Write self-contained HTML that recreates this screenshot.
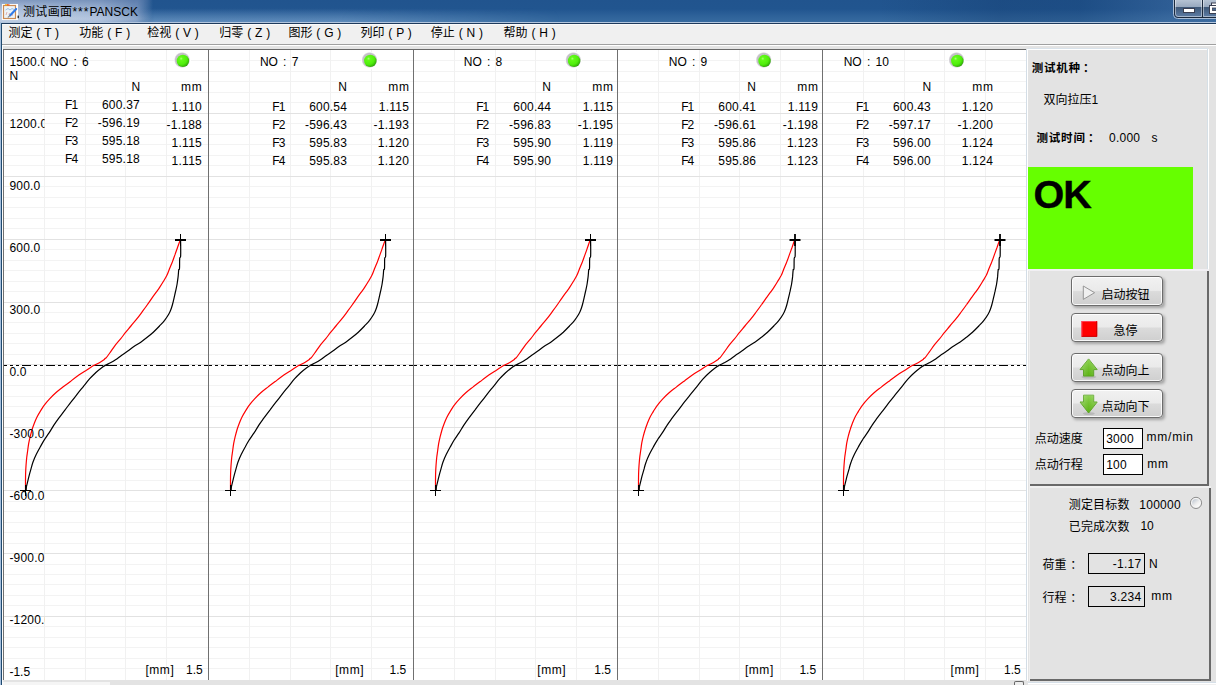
<!DOCTYPE html>
<html lang="zh-CN"><head><meta charset="utf-8"><title>测试画面***PANSCK</title>
<style>

html,body{margin:0;padding:0;}
body{width:1216px;height:685px;position:relative;overflow:hidden;background:#e3e3e3;
 font-family:"Liberation Sans", "Noto Sans CJK SC", sans-serif;font-size:12px;color:#000;line-height:1;}
.abs{position:absolute;}
.t{position:absolute;white-space:nowrap;line-height:14px;height:14px;}
.b{font-weight:bold;}
#titlebar{position:absolute;left:0;top:0;width:1216px;height:22px;
 background:linear-gradient(to bottom,#21548e 0,#21558f 9px,#2c6098 15px,#376ba0 22px);}
#titleglow{position:absolute;left:0;top:0;width:230px;height:22px;
 background:linear-gradient(to right,rgba(190,205,228,.95) 0,rgba(176,194,222,.9) 100px,rgba(150,172,208,.7) 137px,rgba(120,150,195,0) 153px);}
#menubar{position:absolute;left:2px;top:24px;width:1214px;height:20px;background:#f0f0f0;border-top:1px solid #fbfbfb;box-sizing:border-box;}
.mi{position:absolute;top:25.6px;height:14px;line-height:14px;white-space:nowrap;font-size:12px;word-spacing:.5px;}
.btn{position:absolute;left:1070.6px;width:92px;height:29.7px;box-sizing:border-box;border:1px solid #6c6c6c;border-radius:4px;
 background:linear-gradient(to bottom,#f1f1f1 0,#eaeaea 48%,#dbdbdb 52%,#cfcfcf 100%);
 box-shadow:inset 0 0 0 1px rgba(255,255,255,.85), 2px 2px 3px rgba(0,0,0,.28);}
.btn span{position:absolute;white-space:nowrap;line-height:14px;height:14px;font-size:12px;}
.inp{position:absolute;box-sizing:border-box;border:1px solid #000;}

</style></head><body>
<div id="titlebar"></div>
<div class="abs" style="left:880px;top:0;width:336px;height:22px;background:linear-gradient(to right,rgba(20,60,110,0) 0,rgba(20,60,110,.35) 120px,rgba(20,60,110,.3) 200px,rgba(70,110,160,.35) 290px)"></div>
<div class="abs" style="left:140px;top:8px;width:420px;height:14px;background:linear-gradient(to bottom,rgba(150,185,225,0) 0,rgba(150,185,225,.42) 100%);-webkit-mask-image:linear-gradient(to right,transparent 0,#000 14px,#000 200px,transparent 100%);mask-image:linear-gradient(to right,transparent 0,#000 14px,#000 200px,transparent 100%)"></div>
<div id="titleglow"></div>
<div class="abs" style="left:0;top:0;width:170px;height:22px;background:linear-gradient(to bottom,rgba(60,95,150,.42) 0,rgba(60,95,150,.18) 6px,rgba(60,95,150,0) 12px,rgba(255,255,255,.18) 19px,rgba(255,255,255,.05) 22px);-webkit-mask-image:linear-gradient(to right,#000 0,#000 134px,transparent 152px);mask-image:linear-gradient(to right,#000 0,#000 134px,transparent 152px)"></div>
<div class="abs" style="left:0;top:22px;width:1216px;height:1px;background:#b3c6de"></div>
<div class="abs" style="left:1px;top:23px;width:1215px;height:1px;background:#1e3a5c"></div>
<div class="abs" style="left:0;top:22px;width:1px;height:663px;background:#a5bedb"></div>
<div class="abs" style="left:1px;top:23px;width:1px;height:662px;background:#1f4a70"></div>
<div class="abs" style="left:2px;top:24px;width:1px;height:661px;background:#fcfcfc"></div>
<svg class="abs" style="left:2px;top:4px" width="18" height="16" viewBox="0 0 18 16"><rect x="0" y="0" width="16" height="16" fill="#fff"/><rect x="1.5" y="1.5" width="12" height="13" fill="#eef3f6" stroke="#c98a55" stroke-width="1.2"/><rect x="3" y="0.3" width="3" height="1.2" fill="#f6a400"/><rect x="5" y="0.3" width="2.5" height="1.2" fill="#f05030"/><path d="M3.5 6 L6 4.5 L8 6 L10 4.5 L12 5.5" stroke="#9cc0e8" stroke-width="1" fill="none"/><path d="M4 11 L5 8 M7 11 L7.5 9 M10 12 L10.5 10" stroke="#d8a0a0" stroke-width=".8" fill="none"/><path d="M14.2 5 L8 11.4" stroke="#2f7ae8" stroke-width="2.1" stroke-linecap="round"/><path d="M7.6 11.8 L6.2 13.2" stroke="#8a8a8a" stroke-width="1.2" stroke-linecap="round"/><rect x="15.6" y="11.6" width="1.2" height="2.6" fill="#111"/></svg>
<div class="t" style="left:23px;top:5.4px;font-size:12px;"><span style="letter-spacing:.35px">测试画面</span><span style="letter-spacing:1px">***</span>PANSCK</div>
<svg class="abs" style="left:1168px;top:0" width="48" height="22" viewBox="1168 0 48 22"><defs><linearGradient id="cb" x1="0" y1="0" x2="0" y2="1"><stop offset="0" stop-color="#b9c6d6"/><stop offset=".44" stop-color="#97a8be"/><stop offset=".46" stop-color="#3e5878"/><stop offset="1" stop-color="#5f7fa8"/></linearGradient></defs><path d="M1173.5 -1 V14.5 Q1173.5 18.5 1177.5 18.5 H1217" fill="none" stroke="#a9bdd6" stroke-width="1"/><path d="M1174.5 -1 V14 Q1174.5 17.5 1178 17.5 H1217 V-1 Z" fill="url(#cb)" stroke="#1b2a3e" stroke-width="1"/><path d="M1175.5 0 V14 Q1175.5 16.5 1178 16.5 H1201.5 V0" fill="none" stroke="rgba(255,255,255,.45)" stroke-width="1"/><path d="M1202.5 0 V17" stroke="#1b2a3e" stroke-width="1"/><path d="M1203.5 0 V16.5 H1217" stroke="rgba(255,255,255,.45)" stroke-width="1" fill="none"/><rect x="1183.5" y="8.5" width="11" height="4" fill="#fff" stroke="#3a3f52" stroke-width="1"/><rect x="1211.5" y="3" width="8" height="6" fill="#fff" stroke="#3a3f52" stroke-width="1"/><rect x="1209.5" y="5.5" width="10" height="8" fill="#fff" stroke="#3a3f52" stroke-width="1"/><rect x="1212.5" y="8" width="5" height="2.5" fill="#4a6a90" stroke="#3a3f52" stroke-width=".8"/></svg>
<div id="menubar"></div>
<div class="abs" style="left:2px;top:44px;width:1214px;height:1px;background:#a0a0a0"></div>
<div class="abs" style="left:2px;top:45px;width:1214px;height:1px;background:#fff"></div>
<div class="mi" style="left:8.5px">测定 ( T )</div>
<div class="mi" style="left:79.3px">功能 ( F )</div>
<div class="mi" style="left:147.3px">检视 ( V )</div>
<div class="mi" style="left:219.3px">归零 ( Z )</div>
<div class="mi" style="left:288.5px">图形 ( G )</div>
<div class="mi" style="left:360.5px">列印 ( P )</div>
<div class="mi" style="left:430.8px">停止 ( N )</div>
<div class="mi" style="left:503.6px">帮助 ( H )</div>
<svg class="abs" style="left:0;top:46px" width="1030" height="639" viewBox="0 46 1030 639" font-family='&quot;Liberation Sans&quot;, &quot;Noto Sans CJK SC&quot;, sans-serif' font-size="12">
<rect x="3" y="49" width="1024" height="632" fill="#fff"/>
<path d="M4 60.5H1026M4 71.5H1026M4 81.5H1026M4 92.5H1026M4 102.5H1026M4 123.5H1026M4 134.5H1026M4 144.5H1026M4 155.5H1026M4 165.5H1026M4 186.5H1026M4 197.5H1026M4 207.5H1026M4 218.5H1026M4 228.5H1026M4 249.5H1026M4 260.5H1026M4 270.5H1026M4 281.5H1026M4 291.5H1026M4 312.5H1026M4 322.5H1026M4 333.5H1026M4 343.5H1026M4 354.5H1026M4 375.5H1026M4 385.5H1026M4 396.5H1026M4 406.5H1026M4 417.5H1026M4 438.5H1026M4 448.5H1026M4 459.5H1026M4 469.5H1026M4 480.5H1026M4 501.5H1026M4 511.5H1026M4 522.5H1026M4 532.5H1026M4 543.5H1026M4 564.5H1026M4 574.5H1026M4 584.5H1026M4 595.5H1026M4 605.5H1026M4 626.5H1026M4 637.5H1026M4 647.5H1026M4 658.5H1026M4 668.5H1026" stroke="#f3f3f3" stroke-width="1" fill="none"/>
<path d="M44.5 50V680M85.5 50V680M125.5 50V680M166.5 50V680M249.5 50V680M290.5 50V680M330.5 50V680M371.5 50V680M454.5 50V680M495.5 50V680M535.5 50V680M576.5 50V680M658.5 50V680M699.5 50V680M739.5 50V680M780.5 50V680M863.5 50V680M904.5 50V680M944.5 50V680M985.5 50V680" stroke="#f1f1f1" stroke-width="1" fill="none"/>
<path d="M4 113.5H1026M4 176.5H1026M4 239.5H1026M4 302.5H1026M4 364.5H1026M4 427.5H1026M4 490.5H1026M4 553.5H1026M4 616.5H1026" stroke="#e2e2e2" stroke-width="1" fill="none"/>
<path d="M3 49.5H1026" stroke="#696969" stroke-width="1" fill="none"/>
<path d="M3.5 50V681M208.5 50V681M413.5 50V681M617.5 50V681M822.5 50V681" stroke="#707070" stroke-width="1" fill="none"/>
<path d="M1026.5 49V681" stroke="#d3dde6" stroke-width="1"/><path d="M1027.5 49V681" stroke="#fff" stroke-width="1"/>
<path d="M4 365.5H108" stroke="#000" stroke-width="1" stroke-dasharray="9 3 3 3 3 3" stroke-dashoffset="6" fill="none"/>
<path d="M108 365.5H208" stroke="#000" stroke-width="1" stroke-dasharray="9 3 3 3 3 3" fill="none"/>
<path d="M209 365.5H313" stroke="#000" stroke-width="1" stroke-dasharray="9 3 3 3 3 3" stroke-dashoffset="6" fill="none"/>
<path d="M313 365.5H413" stroke="#000" stroke-width="1" stroke-dasharray="9 3 3 3 3 3" fill="none"/>
<path d="M414 365.5H518" stroke="#000" stroke-width="1" stroke-dasharray="9 3 3 3 3 3" stroke-dashoffset="6" fill="none"/>
<path d="M518 365.5H617" stroke="#000" stroke-width="1" stroke-dasharray="9 3 3 3 3 3" fill="none"/>
<path d="M618 365.5H722" stroke="#000" stroke-width="1" stroke-dasharray="9 3 3 3 3 3" stroke-dashoffset="6" fill="none"/>
<path d="M722 365.5H822" stroke="#000" stroke-width="1" stroke-dasharray="9 3 3 3 3 3" fill="none"/>
<path d="M823 365.5H927" stroke="#000" stroke-width="1" stroke-dasharray="9 3 3 3 3 3" stroke-dashoffset="6" fill="none"/>
<path d="M927 365.5H1026" stroke="#000" stroke-width="1" stroke-dasharray="9 3 3 3 3 3" fill="none"/>
<path d="M180.6 240.0C180.6 241.3 180.7 245.2 180.7 248.0C180.7 250.8 180.8 254.8 180.6 256.5C180.4 258.2 179.9 256.5 179.7 258.5C179.5 260.5 179.7 266.6 179.5 268.5C179.3 270.4 178.9 268.6 178.7 270.0C178.5 271.4 178.4 274.6 178.1 276.9C177.8 279.2 177.5 281.6 177.1 284.0C176.7 286.4 176.1 288.9 175.6 291.2C175.1 293.5 174.6 295.6 174.1 297.8C173.6 300.0 173.0 302.6 172.5 304.5C172.0 306.4 171.6 307.6 171.0 309.2C170.4 310.8 169.8 312.4 168.7 314.3C167.6 316.2 166.1 318.4 164.6 320.4C163.1 322.3 161.4 324.0 159.5 326.0C157.6 328.0 155.4 330.3 153.3 332.2C151.2 334.1 149.2 335.7 147.2 337.3C145.2 338.9 143.3 340.4 141.1 341.9C138.9 343.4 136.1 345.0 133.9 346.5C131.7 348.0 129.8 349.7 127.8 351.1C125.8 352.6 123.8 353.8 121.7 355.2C119.7 356.6 117.4 358.5 115.5 359.8C113.6 361.1 112.1 361.9 110.4 362.8C108.7 363.7 106.8 364.6 105.3 365.4C103.8 366.2 103.3 366.5 101.7 367.7C100.1 368.9 97.6 370.9 95.6 372.8C93.6 374.7 91.5 376.6 89.5 378.9C87.5 381.2 85.3 384.1 83.3 386.6C81.2 389.2 79.2 391.6 77.2 394.2C75.2 396.8 73.1 399.2 71.1 401.9C69.0 404.5 67.0 407.4 64.9 410.1C62.9 412.8 60.7 415.6 58.8 418.2C56.9 420.8 55.4 422.9 53.7 425.4C52.1 427.9 50.5 430.8 48.9 433.2C47.3 435.6 45.8 437.5 44.3 439.8C42.8 442.1 41.6 444.5 40.2 447.0C38.9 449.5 37.4 452.1 36.2 454.6C35.0 457.1 34.0 459.4 33.1 461.8C32.2 464.2 31.7 466.5 31.0 468.9C30.3 471.3 29.6 473.7 29.0 476.1C28.4 478.5 27.8 481.1 27.3 483.2C26.8 485.3 26.2 487.6 25.9 488.8C25.6 490.0 25.7 490.1 25.7 490.4" stroke="#000" stroke-width="1.2" fill="none"/>
<path d="M180.3 240.0C180.2 240.1 180.4 239.4 180.0 240.6C179.6 241.8 178.4 245.0 177.6 247.3C176.8 249.6 175.9 252.0 175.1 254.4C174.2 256.8 173.4 259.2 172.5 261.6C171.6 264.0 170.4 266.4 169.5 268.7C168.6 271.0 167.9 273.2 166.9 275.3C165.9 277.4 164.5 279.5 163.3 281.5C162.1 283.5 161.0 285.3 159.8 287.1C158.6 288.9 157.5 290.4 156.2 292.2C154.9 294.0 153.5 295.8 152.1 297.8C150.7 299.9 149.3 301.9 147.5 304.5C145.7 307.1 143.0 310.7 141.1 313.3C139.2 315.9 137.7 317.8 136.0 319.9C134.3 322.0 132.6 323.9 130.9 326.0C129.2 328.1 127.5 330.1 125.8 332.2C124.1 334.3 122.3 336.7 120.6 338.8C118.9 340.9 117.2 342.7 115.5 344.9C113.8 347.1 111.9 350.0 110.4 352.1C108.9 354.2 107.2 356.6 106.3 357.7C105.4 358.8 105.2 358.1 104.9 358.4C104.6 358.7 105.1 359.0 104.3 359.6C103.5 360.2 101.7 361.4 100.2 362.3C98.7 363.2 96.2 364.3 95.1 364.9C94.0 365.4 95.0 364.7 93.5 365.6C92.0 366.5 88.8 368.7 86.4 370.2C84.0 371.7 81.8 373.0 79.2 374.8C76.7 376.6 73.8 378.8 71.1 380.9C68.4 382.9 65.5 385.1 62.9 387.1C60.4 389.1 58.0 390.8 55.8 392.7C53.6 394.6 51.5 396.8 49.6 398.8C47.7 400.8 46.0 402.8 44.5 404.9C43.0 406.9 41.7 409.1 40.4 411.1C39.1 413.2 37.9 415.2 36.9 417.2C35.9 419.2 35.1 421.2 34.3 423.3C33.5 425.4 32.8 427.2 32.1 429.5C31.4 431.8 30.6 435.0 30.0 437.3C29.4 439.6 29.1 441.2 28.7 443.4C28.3 445.6 28.0 448.1 27.7 450.5C27.4 452.9 27.0 455.1 26.7 457.7C26.4 460.3 26.2 463.2 26.0 465.9C25.8 468.6 25.7 470.9 25.6 474.0C25.5 477.1 25.5 481.5 25.5 484.2C25.5 486.9 25.5 489.4 25.5 490.4" stroke="#ff0000" stroke-width="1.2" fill="none"/>
<path d="M175.0 240.0H186.0" stroke="#000" stroke-width="2"/><path d="M180.5 234.0V246.0" stroke="#000" stroke-width="1"/>
<path d="M20.0 490.5H31.0" stroke="#000" stroke-width="1"/><path d="M25.5 485.0V496.0" stroke="#000" stroke-width="1"/>
<path d="M25.9 485V490" stroke="#000" stroke-width="1.6"/>
<path d="M385.6 240.0C385.6 241.3 385.7 245.2 385.7 248.0C385.7 250.8 385.8 254.8 385.6 256.5C385.4 258.2 384.9 256.5 384.7 258.5C384.5 260.5 384.7 266.6 384.5 268.5C384.3 270.4 383.9 268.6 383.7 270.0C383.5 271.4 383.4 274.6 383.1 276.9C382.8 279.2 382.5 281.6 382.1 284.0C381.7 286.4 381.1 288.9 380.6 291.2C380.1 293.5 379.6 295.6 379.1 297.8C378.6 300.0 378.0 302.6 377.5 304.5C377.0 306.4 376.6 307.6 376.0 309.2C375.4 310.8 374.8 312.4 373.7 314.3C372.6 316.2 371.1 318.4 369.6 320.4C368.1 322.3 366.4 324.0 364.5 326.0C362.6 328.0 360.4 330.3 358.3 332.2C356.2 334.1 354.2 335.7 352.2 337.3C350.2 338.9 348.3 340.4 346.1 341.9C343.9 343.4 341.1 345.0 338.9 346.5C336.7 348.0 334.8 349.7 332.8 351.1C330.8 352.6 328.8 353.8 326.7 355.2C324.6 356.6 322.4 358.5 320.5 359.8C318.6 361.1 317.1 361.9 315.4 362.8C313.7 363.7 311.8 364.6 310.3 365.4C308.9 366.2 308.3 366.5 306.7 367.7C305.1 368.9 302.6 370.9 300.6 372.8C298.6 374.7 296.6 376.6 294.5 378.9C292.4 381.2 290.4 384.1 288.3 386.6C286.2 389.2 284.2 391.6 282.2 394.2C280.2 396.8 278.2 399.2 276.1 401.9C274.1 404.5 271.9 407.4 269.9 410.1C267.8 412.8 265.7 415.6 263.8 418.2C261.9 420.8 260.3 422.9 258.7 425.4C257.1 427.9 255.5 430.8 253.9 433.2C252.3 435.6 250.8 437.5 249.3 439.8C247.9 442.1 246.5 444.5 245.2 447.0C243.8 449.5 242.4 452.1 241.2 454.6C240.0 457.1 239.0 459.4 238.1 461.8C237.2 464.2 236.7 466.5 236.0 468.9C235.3 471.3 234.6 473.7 234.0 476.1C233.4 478.5 232.8 481.1 232.3 483.2C231.8 485.3 231.2 487.6 230.9 488.8C230.6 490.0 230.7 490.1 230.7 490.4" stroke="#000" stroke-width="1.2" fill="none"/>
<path d="M385.3 240.0C385.2 240.1 385.4 239.4 385.0 240.6C384.6 241.8 383.4 245.0 382.6 247.3C381.8 249.6 381.0 252.0 380.1 254.4C379.2 256.8 378.4 259.2 377.5 261.6C376.6 264.0 375.4 266.4 374.5 268.7C373.6 271.0 372.9 273.2 371.9 275.3C370.9 277.4 369.5 279.5 368.3 281.5C367.1 283.5 366.0 285.3 364.8 287.1C363.6 288.9 362.5 290.4 361.2 292.2C359.9 294.0 358.6 295.8 357.1 297.8C355.7 299.9 354.3 301.9 352.5 304.5C350.7 307.1 348.0 310.7 346.1 313.3C344.2 315.9 342.7 317.8 341.0 319.9C339.3 322.0 337.6 323.9 335.9 326.0C334.2 328.1 332.5 330.1 330.8 332.2C329.1 334.3 327.3 336.7 325.6 338.8C323.9 340.9 322.2 342.7 320.5 344.9C318.8 347.1 316.9 350.0 315.4 352.1C313.9 354.2 312.2 356.6 311.3 357.7C310.4 358.8 310.2 358.1 309.9 358.4C309.6 358.7 310.1 359.0 309.3 359.6C308.5 360.2 306.7 361.4 305.2 362.3C303.7 363.2 301.2 364.3 300.1 364.9C299.0 365.4 299.9 364.7 298.5 365.6C297.1 366.5 293.8 368.7 291.4 370.2C289.0 371.7 286.8 373.0 284.2 374.8C281.6 376.6 278.8 378.8 276.1 380.9C273.4 382.9 270.4 385.1 267.9 387.1C265.3 389.1 263.0 390.8 260.8 392.7C258.6 394.6 256.5 396.8 254.6 398.8C252.7 400.8 251.0 402.8 249.5 404.9C248.0 406.9 246.7 409.1 245.4 411.1C244.1 413.2 242.9 415.2 241.9 417.2C240.9 419.2 240.1 421.2 239.3 423.3C238.5 425.4 237.8 427.2 237.1 429.5C236.4 431.8 235.6 435.0 235.0 437.3C234.4 439.6 234.1 441.2 233.7 443.4C233.3 445.6 233.0 448.1 232.7 450.5C232.4 452.9 232.0 455.1 231.7 457.7C231.4 460.3 231.2 463.2 231.0 465.9C230.8 468.6 230.7 470.9 230.6 474.0C230.5 477.1 230.5 481.5 230.5 484.2C230.5 486.9 230.5 489.4 230.5 490.4" stroke="#ff0000" stroke-width="1.2" fill="none"/>
<path d="M380.0 240.0H391.0" stroke="#000" stroke-width="2"/><path d="M385.5 234.0V246.0" stroke="#000" stroke-width="1"/>
<path d="M225.0 490.5H236.0" stroke="#000" stroke-width="1"/><path d="M230.5 485.0V496.0" stroke="#000" stroke-width="1"/>
<path d="M230.9 485V490" stroke="#000" stroke-width="1.6"/>
<path d="M590.6 240.0C590.6 241.3 590.7 245.2 590.7 248.0C590.7 250.8 590.8 254.8 590.6 256.5C590.4 258.2 589.9 256.5 589.7 258.5C589.5 260.5 589.7 266.6 589.5 268.5C589.3 270.4 588.9 268.6 588.7 270.0C588.5 271.4 588.4 274.6 588.1 276.9C587.8 279.2 587.5 281.6 587.1 284.0C586.7 286.4 586.1 288.9 585.6 291.2C585.1 293.5 584.6 295.6 584.1 297.8C583.6 300.0 583.0 302.6 582.5 304.5C582.0 306.4 581.6 307.6 581.0 309.2C580.4 310.8 579.8 312.4 578.7 314.3C577.6 316.2 576.1 318.4 574.6 320.4C573.1 322.3 571.4 324.0 569.5 326.0C567.6 328.0 565.3 330.3 563.3 332.2C561.2 334.1 559.2 335.7 557.2 337.3C555.2 338.9 553.3 340.4 551.1 341.9C548.9 343.4 546.1 345.0 543.9 346.5C541.7 348.0 539.8 349.7 537.8 351.1C535.8 352.6 533.8 353.8 531.7 355.2C529.7 356.6 527.4 358.5 525.5 359.8C523.6 361.1 522.1 361.9 520.4 362.8C518.7 363.7 516.8 364.6 515.3 365.4C513.8 366.2 513.3 366.5 511.7 367.7C510.1 368.9 507.6 370.9 505.6 372.8C503.6 374.7 501.6 376.6 499.5 378.9C497.4 381.2 495.4 384.1 493.3 386.6C491.2 389.2 489.2 391.6 487.2 394.2C485.2 396.8 483.2 399.2 481.1 401.9C479.1 404.5 476.9 407.4 474.9 410.1C472.8 412.8 470.7 415.6 468.8 418.2C466.9 420.8 465.4 422.9 463.7 425.4C462.0 427.9 460.5 430.8 458.9 433.2C457.3 435.6 455.8 437.5 454.3 439.8C452.9 442.1 451.6 444.5 450.2 447.0C448.8 449.5 447.4 452.1 446.2 454.6C445.0 457.1 444.0 459.4 443.1 461.8C442.2 464.2 441.7 466.5 441.0 468.9C440.3 471.3 439.6 473.7 439.0 476.1C438.4 478.5 437.8 481.1 437.3 483.2C436.8 485.3 436.2 487.6 435.9 488.8C435.6 490.0 435.7 490.1 435.7 490.4" stroke="#000" stroke-width="1.2" fill="none"/>
<path d="M590.3 240.0C590.2 240.1 590.5 239.4 590.0 240.6C589.5 241.8 588.4 245.0 587.6 247.3C586.8 249.6 586.0 252.0 585.1 254.4C584.2 256.8 583.4 259.2 582.5 261.6C581.6 264.0 580.4 266.4 579.5 268.7C578.6 271.0 577.9 273.2 576.9 275.3C575.9 277.4 574.5 279.5 573.3 281.5C572.1 283.5 571.0 285.3 569.8 287.1C568.6 288.9 567.5 290.4 566.2 292.2C564.9 294.0 563.6 295.8 562.1 297.8C560.6 299.9 559.3 301.9 557.5 304.5C555.7 307.1 553.0 310.7 551.1 313.3C549.2 315.9 547.7 317.8 546.0 319.9C544.3 322.0 542.6 323.9 540.9 326.0C539.2 328.1 537.5 330.1 535.8 332.2C534.1 334.3 532.3 336.7 530.6 338.8C528.9 340.9 527.2 342.7 525.5 344.9C523.8 347.1 521.9 350.0 520.4 352.1C518.9 354.2 517.2 356.6 516.3 357.7C515.4 358.8 515.2 358.1 514.9 358.4C514.6 358.7 515.1 359.0 514.3 359.6C513.5 360.2 511.7 361.4 510.2 362.3C508.7 363.2 506.2 364.3 505.1 364.9C504.0 365.4 504.9 364.7 503.5 365.6C502.1 366.5 498.8 368.7 496.4 370.2C494.0 371.7 491.8 373.0 489.2 374.8C486.6 376.6 483.8 378.8 481.1 380.9C478.4 382.9 475.4 385.1 472.9 387.1C470.3 389.1 468.0 390.8 465.8 392.7C463.6 394.6 461.5 396.8 459.6 398.8C457.7 400.8 456.0 402.8 454.5 404.9C453.0 406.9 451.7 409.1 450.4 411.1C449.1 413.2 447.9 415.2 446.9 417.2C445.9 419.2 445.1 421.2 444.3 423.3C443.5 425.4 442.8 427.2 442.1 429.5C441.4 431.8 440.6 435.0 440.0 437.3C439.4 439.6 439.1 441.2 438.7 443.4C438.3 445.6 438.0 448.1 437.7 450.5C437.4 452.9 437.0 455.1 436.7 457.7C436.4 460.3 436.2 463.2 436.0 465.9C435.8 468.6 435.7 470.9 435.6 474.0C435.5 477.1 435.5 481.5 435.5 484.2C435.5 486.9 435.5 489.4 435.5 490.4" stroke="#ff0000" stroke-width="1.2" fill="none"/>
<path d="M585.0 240.0H596.0" stroke="#000" stroke-width="2"/><path d="M590.5 234.0V246.0" stroke="#000" stroke-width="1"/>
<path d="M430.0 490.5H441.0" stroke="#000" stroke-width="1"/><path d="M435.5 485.0V496.0" stroke="#000" stroke-width="1"/>
<path d="M435.9 485V490" stroke="#000" stroke-width="1.6"/>
<path d="M795.1 240.0C795.1 241.3 795.2 245.2 795.2 248.0C795.2 250.8 795.3 254.8 795.1 256.5C794.9 258.2 794.4 256.5 794.2 258.5C794.0 260.5 794.2 266.6 794.0 268.5C793.8 270.4 793.4 268.6 793.2 270.0C792.9 271.4 792.8 274.6 792.6 276.9C792.3 279.2 792.0 281.6 791.6 284.0C791.1 286.4 790.6 288.9 790.1 291.2C789.5 293.5 789.1 295.6 788.5 297.8C788.0 300.0 787.4 302.6 786.9 304.5C786.4 306.4 786.0 307.6 785.4 309.2C784.8 310.8 784.2 312.4 783.1 314.3C782.0 316.2 780.5 318.4 778.9 320.4C777.4 322.3 775.7 324.0 773.8 326.0C771.9 328.0 769.6 330.3 767.5 332.2C765.5 334.1 763.4 335.7 761.4 337.3C759.3 338.9 757.5 340.4 755.2 341.9C753.0 343.4 750.2 345.0 747.9 346.5C745.7 348.0 743.8 349.7 741.8 351.1C739.7 352.6 737.7 353.8 735.6 355.2C733.6 356.6 731.3 358.5 729.4 359.8C727.5 361.1 725.9 361.9 724.2 362.8C722.5 363.7 720.5 364.6 719.1 365.4C717.6 366.2 717.1 366.5 715.4 367.7C713.8 368.9 711.3 370.9 709.3 372.8C707.2 374.7 705.2 376.6 703.1 378.9C701.0 381.2 698.9 384.1 696.9 386.6C694.8 389.2 692.8 391.6 690.7 394.2C688.6 396.8 686.6 399.2 684.5 401.9C682.5 404.5 680.4 407.4 678.3 410.1C676.2 412.8 674.0 415.6 672.1 418.2C670.2 420.8 668.6 422.9 667.0 425.4C665.3 427.9 663.7 430.8 662.1 433.2C660.5 435.6 658.9 437.5 657.5 439.8C656.0 442.1 654.7 444.5 653.3 447.0C652.0 449.5 650.5 452.1 649.3 454.6C648.1 457.1 647.0 459.4 646.2 461.8C645.3 464.2 644.7 466.5 644.1 468.9C643.4 471.3 642.7 473.7 642.0 476.1C641.4 478.5 640.8 481.1 640.3 483.2C639.8 485.3 639.2 487.6 638.9 488.8C638.6 490.0 638.7 490.1 638.7 490.4" stroke="#000" stroke-width="1.2" fill="none"/>
<path d="M794.8 240.0C794.7 240.1 794.9 239.4 794.5 240.6C794.0 241.8 792.9 245.0 792.1 247.3C791.2 249.6 790.4 252.0 789.5 254.4C788.7 256.8 787.9 259.2 786.9 261.6C786.0 264.0 784.8 266.4 783.9 268.7C783.0 271.0 782.3 273.2 781.3 275.3C780.2 277.4 778.8 279.5 777.6 281.5C776.4 283.5 775.3 285.3 774.1 287.1C772.9 288.9 771.8 290.4 770.5 292.2C769.2 294.0 767.8 295.8 766.3 297.8C764.9 299.9 763.5 301.9 761.7 304.5C759.8 307.1 757.2 310.7 755.2 313.3C753.3 315.9 751.8 317.8 750.1 319.9C748.4 322.0 746.6 323.9 744.9 326.0C743.2 328.1 741.5 330.1 739.8 332.2C738.0 334.3 736.3 336.7 734.5 338.8C732.8 340.9 731.1 342.7 729.4 344.9C727.7 347.1 725.8 350.0 724.2 352.1C722.7 354.2 721.0 356.6 720.1 357.7C719.2 358.8 719.0 358.1 718.7 358.4C718.3 358.7 718.9 359.0 718.1 359.6C717.3 360.2 715.5 361.4 713.9 362.3C712.4 363.2 709.9 364.3 708.8 364.9C707.6 365.4 708.6 364.7 707.2 365.6C705.7 366.5 702.4 368.7 700.0 370.2C697.6 371.7 695.3 373.0 692.7 374.8C690.1 376.6 687.3 378.8 684.5 380.9C681.8 382.9 678.8 385.1 676.3 387.1C673.7 389.1 671.3 390.8 669.1 392.7C666.9 394.6 664.7 396.8 662.8 398.8C660.9 400.8 659.2 402.8 657.7 404.9C656.1 406.9 654.8 409.1 653.5 411.1C652.3 413.2 651.0 415.2 650.0 417.2C649.0 419.2 648.2 421.2 647.4 423.3C646.6 425.4 645.9 427.2 645.2 429.5C644.4 431.8 643.6 435.0 643.0 437.3C642.5 439.6 642.1 441.2 641.7 443.4C641.3 445.6 641.1 448.1 640.7 450.5C640.4 452.9 640.0 455.1 639.7 457.7C639.4 460.3 639.2 463.2 639.0 465.9C638.8 468.6 638.7 470.9 638.6 474.0C638.5 477.1 638.5 481.5 638.5 484.2C638.5 486.9 638.5 489.4 638.5 490.4" stroke="#ff0000" stroke-width="1.2" fill="none"/>
<path d="M789.5 240.0H800.5" stroke="#000" stroke-width="2"/><path d="M795.0 234.0V246.0" stroke="#000" stroke-width="1.8"/>
<path d="M633.0 490.5H644.0" stroke="#000" stroke-width="1"/><path d="M638.5 485.0V496.0" stroke="#000" stroke-width="1"/>
<path d="M638.9 485V490" stroke="#000" stroke-width="1.6"/>
<path d="M1000.1 240.0C1000.1 241.3 1000.2 245.2 1000.2 248.0C1000.2 250.8 1000.3 254.8 1000.1 256.5C999.9 258.2 999.4 256.5 999.2 258.5C999.0 260.5 999.2 266.6 999.0 268.5C998.8 270.4 998.4 268.6 998.2 270.0C997.9 271.4 997.8 274.6 997.6 276.9C997.3 279.2 997.0 281.6 996.6 284.0C996.1 286.4 995.6 288.9 995.1 291.2C994.5 293.5 994.1 295.6 993.5 297.8C993.0 300.0 992.4 302.6 991.9 304.5C991.4 306.4 991.0 307.6 990.4 309.2C989.8 310.8 989.2 312.4 988.1 314.3C987.0 316.2 985.5 318.4 983.9 320.4C982.4 322.3 980.7 324.0 978.8 326.0C976.9 328.0 974.6 330.3 972.5 332.2C970.5 334.1 968.4 335.7 966.4 337.3C964.3 338.9 962.5 340.4 960.2 341.9C958.0 343.4 955.2 345.0 952.9 346.5C950.7 348.0 948.8 349.7 946.8 351.1C944.7 352.6 942.7 353.8 940.6 355.2C938.6 356.6 936.3 358.5 934.4 359.8C932.5 361.1 930.9 361.9 929.2 362.8C927.5 363.7 925.5 364.6 924.1 365.4C922.6 366.2 922.1 366.5 920.4 367.7C918.8 368.9 916.3 370.9 914.3 372.8C912.2 374.7 910.2 376.6 908.1 378.9C906.0 381.2 903.9 384.1 901.9 386.6C899.8 389.2 897.8 391.6 895.7 394.2C893.6 396.8 891.6 399.2 889.5 401.9C887.5 404.5 885.4 407.4 883.3 410.1C881.2 412.8 879.0 415.6 877.1 418.2C875.2 420.8 873.6 422.9 872.0 425.4C870.3 427.9 868.7 430.8 867.1 433.2C865.5 435.6 863.9 437.5 862.5 439.8C861.0 442.1 859.7 444.5 858.3 447.0C857.0 449.5 855.5 452.1 854.3 454.6C853.1 457.1 852.0 459.4 851.2 461.8C850.3 464.2 849.7 466.5 849.1 468.9C848.4 471.3 847.7 473.7 847.0 476.1C846.4 478.5 845.8 481.1 845.3 483.2C844.8 485.3 844.2 487.6 843.9 488.8C843.6 490.0 843.7 490.1 843.7 490.4" stroke="#000" stroke-width="1.2" fill="none"/>
<path d="M999.8 240.0C999.7 240.1 999.9 239.4 999.5 240.6C999.0 241.8 997.9 245.0 997.1 247.3C996.2 249.6 995.4 252.0 994.5 254.4C993.7 256.8 992.9 259.2 991.9 261.6C991.0 264.0 989.8 266.4 988.9 268.7C988.0 271.0 987.3 273.2 986.3 275.3C985.2 277.4 983.8 279.5 982.6 281.5C981.4 283.5 980.3 285.3 979.1 287.1C977.9 288.9 976.8 290.4 975.5 292.2C974.2 294.0 972.8 295.8 971.3 297.8C969.9 299.9 968.5 301.9 966.7 304.5C964.8 307.1 962.2 310.7 960.2 313.3C958.3 315.9 956.8 317.8 955.1 319.9C953.4 322.0 951.6 323.9 949.9 326.0C948.2 328.1 946.5 330.1 944.8 332.2C943.0 334.3 941.3 336.7 939.5 338.8C937.8 340.9 936.1 342.7 934.4 344.9C932.7 347.1 930.8 350.0 929.2 352.1C927.7 354.2 926.0 356.6 925.1 357.7C924.2 358.8 924.0 358.1 923.7 358.4C923.3 358.7 923.9 359.0 923.1 359.6C922.3 360.2 920.5 361.4 918.9 362.3C917.4 363.2 914.9 364.3 913.8 364.9C912.6 365.4 913.6 364.7 912.2 365.6C910.7 366.5 907.4 368.7 905.0 370.2C902.6 371.7 900.3 373.0 897.7 374.8C895.1 376.6 892.3 378.8 889.5 380.9C886.8 382.9 883.8 385.1 881.3 387.1C878.7 389.1 876.3 390.8 874.1 392.7C871.9 394.6 869.7 396.8 867.8 398.8C865.9 400.8 864.2 402.8 862.7 404.9C861.1 406.9 859.8 409.1 858.5 411.1C857.3 413.2 856.0 415.2 855.0 417.2C854.0 419.2 853.2 421.2 852.4 423.3C851.6 425.4 850.9 427.2 850.2 429.5C849.4 431.8 848.6 435.0 848.0 437.3C847.5 439.6 847.1 441.2 846.7 443.4C846.3 445.6 846.1 448.1 845.7 450.5C845.4 452.9 845.0 455.1 844.7 457.7C844.4 460.3 844.2 463.2 844.0 465.9C843.8 468.6 843.7 470.9 843.6 474.0C843.5 477.1 843.5 481.5 843.5 484.2C843.5 486.9 843.5 489.4 843.5 490.4" stroke="#ff0000" stroke-width="1.2" fill="none"/>
<path d="M994.5 240.0H1005.5" stroke="#000" stroke-width="2"/><path d="M1000.0 234.0V246.0" stroke="#000" stroke-width="1.8"/>
<path d="M838.0 490.5H849.0" stroke="#000" stroke-width="1"/><path d="M843.5 485.0V496.0" stroke="#000" stroke-width="1"/>
<path d="M843.9 485V490" stroke="#000" stroke-width="1.6"/>
<defs><radialGradient id="led" cx=".36" cy=".32" r=".75"><stop offset="0" stop-color="#a8ff7a"/><stop offset=".18" stop-color="#62fa18"/><stop offset=".62" stop-color="#50ee0c"/><stop offset=".88" stop-color="#36b808"/><stop offset="1" stop-color="#2a8a10"/></radialGradient><radialGradient id="halo" cx=".5" cy=".5" r=".5"><stop offset=".82" stop-color="#c4c0c8"/><stop offset="1" stop-color="#c4c0c8" stop-opacity="0"/></radialGradient></defs>
<rect x="173.9" y="52.1" width="17" height="17" fill="#fff"/>
<circle cx="182.1" cy="60.0" r="8.1" fill="url(#halo)"/>
<circle cx="182.9" cy="60.9" r="6.2" fill="url(#led)"/>
<rect x="361.3" y="52.1" width="17" height="17" fill="#fff"/>
<circle cx="369.5" cy="60.0" r="8.1" fill="url(#halo)"/>
<circle cx="370.3" cy="60.9" r="6.2" fill="url(#led)"/>
<rect x="565.1" y="52.1" width="17" height="17" fill="#fff"/>
<circle cx="573.3" cy="60.0" r="8.1" fill="url(#halo)"/>
<circle cx="574.1" cy="60.9" r="6.2" fill="url(#led)"/>
<rect x="755.5" y="52.1" width="17" height="17" fill="#fff"/>
<circle cx="763.7" cy="60.0" r="8.1" fill="url(#halo)"/>
<circle cx="764.5" cy="60.9" r="6.2" fill="url(#led)"/>
<rect x="948.3" y="52.1" width="17" height="17" fill="#fff"/>
<circle cx="956.5" cy="60.0" r="8.1" fill="url(#halo)"/>
<circle cx="957.3" cy="60.9" r="6.2" fill="url(#led)"/>
<clipPath id="lc"><rect x="4" y="50" width="40.6" height="631"/></clipPath>
<g clip-path="url(#lc)">
<text x="9.4" y="65.6" style="letter-spacing:.2px">1500.0</text>
<text x="9.4" y="127.6" style="letter-spacing:.2px">1200.0</text>
<text x="9.4" y="189.6" style="letter-spacing:.2px">900.0</text>
<text x="9.4" y="251.6" style="letter-spacing:.2px">600.0</text>
<text x="9.4" y="313.6" style="letter-spacing:.2px">300.0</text>
<text x="9.4" y="375.6" style="letter-spacing:.2px">0.0</text>
<text x="9.4" y="437.6" style="letter-spacing:.2px">-300.0</text>
<text x="9.4" y="499.6" style="letter-spacing:.2px">-600.0</text>
<text x="9.4" y="561.6" style="letter-spacing:.2px">-900.0</text>
<text x="9.4" y="623.6" style="letter-spacing:.2px">-1200.0</text>
</g>
<text x="9.6" y="79.6">N</text>
<text x="9.4" y="676.2">-1.5</text>
<text x="50.2" y="65.6" style="word-spacing:1.9px">NO : 6</text>
<text x="140.1" y="90.5" text-anchor="end">N</text>
<text x="202.5" y="90.5" text-anchor="end" style="letter-spacing:.7px">mm</text>
<text x="65.0" y="108.5" style="letter-spacing:-.9px">F1</text>
<text x="139.9" y="108.5" text-anchor="end" style="letter-spacing:.2px">600.37</text>
<text x="202.0" y="110.5" text-anchor="end" style="letter-spacing:.25px">1.110</text>
<text x="65.0" y="126.9" style="letter-spacing:-.9px">F2</text>
<text x="139.9" y="126.9" text-anchor="end" style="letter-spacing:.2px">-596.19</text>
<text x="202.0" y="128.9" text-anchor="end" style="letter-spacing:.25px">-1.188</text>
<text x="65.0" y="144.6" style="letter-spacing:-.9px">F3</text>
<text x="139.9" y="144.6" text-anchor="end" style="letter-spacing:.2px">595.18</text>
<text x="202.0" y="146.6" text-anchor="end" style="letter-spacing:.25px">1.115</text>
<text x="65.0" y="162.8" style="letter-spacing:-.9px">F4</text>
<text x="139.9" y="162.8" text-anchor="end" style="letter-spacing:.2px">595.18</text>
<text x="202.0" y="164.8" text-anchor="end" style="letter-spacing:.25px">1.115</text>
<text x="174.3" y="674.4" text-anchor="end" style="letter-spacing:.55px">[mm]</text>
<text x="202.7" y="674.4" text-anchor="end">1.5</text>
<text x="259.9" y="65.6" style="word-spacing:1.9px">NO : 7</text>
<text x="347.0" y="90.5" text-anchor="end">N</text>
<text x="409.6" y="90.5" text-anchor="end" style="letter-spacing:.7px">mm</text>
<text x="272.3" y="110.5" style="letter-spacing:-.9px">F1</text>
<text x="347.1" y="110.5" text-anchor="end" style="letter-spacing:.2px">600.54</text>
<text x="409.1" y="110.5" text-anchor="end" style="letter-spacing:.25px">1.115</text>
<text x="272.3" y="128.9" style="letter-spacing:-.9px">F2</text>
<text x="347.1" y="128.9" text-anchor="end" style="letter-spacing:.2px">-596.43</text>
<text x="409.1" y="128.9" text-anchor="end" style="letter-spacing:.25px">-1.193</text>
<text x="272.3" y="146.6" style="letter-spacing:-.9px">F3</text>
<text x="347.1" y="146.6" text-anchor="end" style="letter-spacing:.2px">595.83</text>
<text x="409.1" y="146.6" text-anchor="end" style="letter-spacing:.25px">1.120</text>
<text x="272.3" y="164.8" style="letter-spacing:-.9px">F4</text>
<text x="347.1" y="164.8" text-anchor="end" style="letter-spacing:.2px">595.83</text>
<text x="409.1" y="164.8" text-anchor="end" style="letter-spacing:.25px">1.120</text>
<text x="364.1" y="674.4" text-anchor="end" style="letter-spacing:.55px">[mm]</text>
<text x="406.2" y="674.4" text-anchor="end">1.5</text>
<text x="463.8" y="65.6" style="word-spacing:1.9px">NO : 8</text>
<text x="551.0" y="90.5" text-anchor="end">N</text>
<text x="613.7" y="90.5" text-anchor="end" style="letter-spacing:.7px">mm</text>
<text x="476.2" y="110.5" style="letter-spacing:-.9px">F1</text>
<text x="551.2" y="110.5" text-anchor="end" style="letter-spacing:.2px">600.44</text>
<text x="613.2" y="110.5" text-anchor="end" style="letter-spacing:.25px">1.115</text>
<text x="476.2" y="128.9" style="letter-spacing:-.9px">F2</text>
<text x="551.2" y="128.9" text-anchor="end" style="letter-spacing:.2px">-596.83</text>
<text x="613.2" y="128.9" text-anchor="end" style="letter-spacing:.25px">-1.195</text>
<text x="476.2" y="146.6" style="letter-spacing:-.9px">F3</text>
<text x="551.2" y="146.6" text-anchor="end" style="letter-spacing:.2px">595.90</text>
<text x="613.2" y="146.6" text-anchor="end" style="letter-spacing:.25px">1.119</text>
<text x="476.2" y="164.8" style="letter-spacing:-.9px">F4</text>
<text x="551.2" y="164.8" text-anchor="end" style="letter-spacing:.2px">595.90</text>
<text x="613.2" y="164.8" text-anchor="end" style="letter-spacing:.25px">1.119</text>
<text x="566.2" y="674.4" text-anchor="end" style="letter-spacing:.55px">[mm]</text>
<text x="611.0" y="674.4" text-anchor="end">1.5</text>
<text x="668.8" y="65.6" style="word-spacing:1.9px">NO : 9</text>
<text x="756.0" y="90.5" text-anchor="end">N</text>
<text x="818.7" y="90.5" text-anchor="end" style="letter-spacing:.7px">mm</text>
<text x="681.2" y="110.5" style="letter-spacing:-.9px">F1</text>
<text x="756.2" y="110.5" text-anchor="end" style="letter-spacing:.2px">600.41</text>
<text x="818.2" y="110.5" text-anchor="end" style="letter-spacing:.25px">1.119</text>
<text x="681.2" y="128.9" style="letter-spacing:-.9px">F2</text>
<text x="756.2" y="128.9" text-anchor="end" style="letter-spacing:.2px">-596.61</text>
<text x="818.2" y="128.9" text-anchor="end" style="letter-spacing:.25px">-1.198</text>
<text x="681.2" y="146.6" style="letter-spacing:-.9px">F3</text>
<text x="756.2" y="146.6" text-anchor="end" style="letter-spacing:.2px">595.86</text>
<text x="818.2" y="146.6" text-anchor="end" style="letter-spacing:.25px">1.123</text>
<text x="681.2" y="164.8" style="letter-spacing:-.9px">F4</text>
<text x="756.2" y="164.8" text-anchor="end" style="letter-spacing:.2px">595.86</text>
<text x="818.2" y="164.8" text-anchor="end" style="letter-spacing:.25px">1.123</text>
<text x="773.8" y="674.4" text-anchor="end" style="letter-spacing:.55px">[mm]</text>
<text x="816.1" y="674.4" text-anchor="end">1.5</text>
<text x="843.7" y="65.6" style="word-spacing:1.9px">NO : 10</text>
<text x="931.1" y="90.5" text-anchor="end">N</text>
<text x="993.6" y="90.5" text-anchor="end" style="letter-spacing:.7px">mm</text>
<text x="856.1" y="110.5" style="letter-spacing:-.9px">F1</text>
<text x="930.9" y="110.5" text-anchor="end" style="letter-spacing:.2px">600.43</text>
<text x="993.1" y="110.5" text-anchor="end" style="letter-spacing:.25px">1.120</text>
<text x="856.1" y="128.9" style="letter-spacing:-.9px">F2</text>
<text x="930.9" y="128.9" text-anchor="end" style="letter-spacing:.2px">-597.17</text>
<text x="993.1" y="128.9" text-anchor="end" style="letter-spacing:.25px">-1.200</text>
<text x="856.1" y="146.6" style="letter-spacing:-.9px">F3</text>
<text x="930.9" y="146.6" text-anchor="end" style="letter-spacing:.2px">596.00</text>
<text x="993.1" y="146.6" text-anchor="end" style="letter-spacing:.25px">1.124</text>
<text x="856.1" y="164.8" style="letter-spacing:-.9px">F4</text>
<text x="930.9" y="164.8" text-anchor="end" style="letter-spacing:.2px">596.00</text>
<text x="993.1" y="164.8" text-anchor="end" style="letter-spacing:.25px">1.124</text>
<text x="979.4" y="674.4" text-anchor="end" style="letter-spacing:.55px">[mm]</text>
<text x="1020.8" y="674.4" text-anchor="end">1.5</text>
</svg>
<div class="abs" style="left:3px;top:680px;width:1024px;height:2px;background:#e3e3e3"></div>
<div class="abs" style="left:3px;top:682px;width:1213px;height:3px;background:#e3e3e3"></div>
<div class="abs" style="left:3px;top:682px;width:107px;height:3px;background:#f5f5f5"></div>
<div class="abs" style="left:1028px;top:682px;width:188px;height:1px;background:#d5dfe8"></div>
<div class="abs" style="left:1028px;top:683px;width:188px;height:1px;background:#fff"></div>
<div class="abs" style="left:1028px;top:684px;width:188px;height:1px;background:#f0f0f0"></div>
<div class="abs" style="left:1014px;top:681px;width:10px;height:6px;background:#ececec;border:1px solid #666;border-bottom:none;box-sizing:border-box;border-radius:2px 2px 0 0"></div>
<div class="abs" style="left:3px;top:46px;width:1213px;height:3px;background:#e3e3e3"></div>
<div class="abs" style="left:1028px;top:48px;width:180px;height:1px;background:#d9e2ea"></div>
<div class="abs" style="left:1028px;top:49px;width:181px;height:1px;background:#fff"></div>
<div class="abs" style="left:1207px;top:49px;width:1px;height:221px;background:#d5dfe6"></div>
<div class="abs" style="left:1208px;top:49px;width:1px;height:222px;background:#fff"></div>
<div class="abs" style="left:1028px;top:269px;width:181px;height:2px;background:#f1eff3"></div>
<div class="abs" style="left:1029px;top:271px;width:1px;height:410px;background:#f0f0f0"></div>
<div class="abs" style="left:1207px;top:271px;width:2px;height:215px;background:#696969"></div>
<div class="abs" style="left:1030px;top:484px;width:179px;height:2px;background:#696969"></div>
<div class="abs" style="left:1029px;top:486px;width:182px;height:2px;background:#f0f0f0"></div>
<div class="abs" style="left:1209px;top:488px;width:2px;height:193px;background:#696969"></div>
<div class="abs" style="left:1030px;top:679px;width:181px;height:2px;background:#696969"></div>
<div class="t b" style="left:1031.7px;top:60.8px;font-size:11.5px;letter-spacing:.8px">测试机种<span style="margin-left:2.2px">：</span></div>
<div class="t" style="left:1043.6px;top:92.7px">双向拉压1</div>
<div class="t b" style="left:1036.5px;top:130.8px;font-size:11.5px;letter-spacing:.8px">测试时间<span style="margin-left:2.2px">：</span></div>
<div class="t" style="left:1109px;top:130.6px;letter-spacing:.25px">0.000</div>
<div class="t" style="left:1151.6px;top:130.6px">s</div>
<div class="abs" style="left:1028px;top:167px;width:165px;height:102px;background:#66ff00"></div>
<div class="abs b" style="left:1033.6px;top:171.7px;font-size:39.6px;line-height:44px;height:44px;white-space:nowrap;letter-spacing:-1.2px;-webkit-text-stroke:.35px #000">OK</div>
<div class="btn" style="top:276.4px"></div>
<div class="btn" style="top:312.6px"></div>
<div class="btn" style="top:352.6px"></div>
<div class="btn" style="top:388.8px"></div>
<svg class="abs" style="left:1070px;top:270px" width="100" height="160" viewBox="1070 270 100 160"><defs><linearGradient id="ga" x1="0" y1="0" x2="1" y2="0"><stop offset="0" stop-color="#93d65a"/><stop offset=".5" stop-color="#68c418"/><stop offset="1" stop-color="#86cf48"/></linearGradient><linearGradient id="gb" x1="0" y1="0" x2="0" y2="1"><stop offset="0" stop-color="#fff" stop-opacity=".25"/><stop offset="1" stop-color="#2a6a00" stop-opacity=".18"/></linearGradient></defs><path d="M1083.3 286 L1094.6 292.7 L1083.3 299.4 Z" fill="#f0f0f0" stroke="#969696" stroke-width="1"/><rect x="1081.4" y="321" width="15.8" height="15.8" fill="#ff0000"/><path d="M1096.7 321.6V336.3H1081.8" stroke="#c80000" stroke-width="1" fill="none"/><path d="M1081.9 336.3V321.5H1096.2" stroke="#ff5a78" stroke-width="1" fill="none" opacity=".7"/><ellipse cx="1088.8" cy="377" rx="7.5" ry="1.6" fill="#000" opacity=".12"/><path d="M1088.6 358.9 L1097.2 369.6 H1093.7 V376.1 H1083.5 V369.6 H1080 Z" fill="url(#ga)" stroke="#62a82c" stroke-width="1" stroke-linejoin="round"/><path d="M1088.6 358.9 L1097.2 369.6 H1093.7 V376.1 H1083.5 V369.6 H1080 Z" fill="url(#gb)"/><ellipse cx="1088.8" cy="413.6" rx="6" ry="1.5" fill="#000" opacity=".12"/><path d="M1088.6 413 L1097.2 402 H1093.7 V395.2 H1083.5 V402 H1080 Z" fill="url(#ga)" stroke="#62a82c" stroke-width="1" stroke-linejoin="round"/><path d="M1088.6 413 L1097.2 402 H1093.7 V395.2 H1083.5 V402 H1080 Z" fill="url(#gb)"/></svg>
<div class="t" style="left:1101.6px;top:287.9px">启动按钮</div>
<div class="t" style="left:1113.6px;top:324.3px">急停</div>
<div class="t" style="left:1101.6px;top:363.8px">点动向上</div>
<div class="t" style="left:1101.6px;top:400.2px">点动向下</div>
<div class="t" style="left:1034.8px;top:432.2px">点动速度</div>
<div class="inp" style="left:1103px;top:428px;width:40px;height:21px;background:#fff"></div>
<div class="t" style="left:1106.2px;top:432.2px;letter-spacing:.25px">3000</div>
<div class="t" style="left:1146.6px;top:430px;letter-spacing:.75px">mm/min</div>
<div class="t" style="left:1034.8px;top:458.1px">点动行程</div>
<div class="inp" style="left:1103px;top:454px;width:40px;height:21px;background:#fff"></div>
<div class="t" style="left:1106.2px;top:458px;letter-spacing:.25px">100</div>
<div class="t" style="left:1147.2px;top:457px;letter-spacing:.8px">mm</div>
<div class="t" style="left:1068.8px;top:497.7px;letter-spacing:.15px">测定目标数</div>
<div class="t" style="left:1139.2px;top:498.2px;letter-spacing:.3px">100000</div>
<svg class="abs" style="left:1188px;top:495px" width="16" height="16" viewBox="1188 495 16 16"><defs><linearGradient id="rg" x1="0.15" y1="0.1" x2="0.8" y2="0.9"><stop offset="0" stop-color="#c4ccd6"/><stop offset=".6" stop-color="#eeeeee"/><stop offset="1" stop-color="#fafafa"/></linearGradient></defs><circle cx="1196" cy="502.9" r="5.6" fill="#f4f4f4" stroke="#8e8e8e" stroke-width="1"/><circle cx="1196" cy="502.9" r="3.9" fill="url(#rg)"/></svg>
<div class="t" style="left:1068.8px;top:520.4px;letter-spacing:.15px">已完成次数</div>
<div class="t" style="left:1140.4px;top:518.6px">10</div>
<div class="t" style="left:1042.6px;top:557.7px">荷重<span style="margin-left:3.6px">：</span></div>
<div class="inp" style="left:1088px;top:553px;width:57px;height:21px"></div>
<div class="t" style="left:1085px;top:556.5px;width:56.4px;text-align:right;letter-spacing:.25px">-1.17</div>
<div class="t" style="left:1149px;top:556.5px">N</div>
<div class="t" style="left:1042.6px;top:590.7px">行程<span style="margin-left:3.6px">：</span></div>
<div class="inp" style="left:1088px;top:586px;width:57px;height:21px"></div>
<div class="t" style="left:1085px;top:589.7px;width:56.4px;text-align:right;letter-spacing:.25px">3.234</div>
<div class="t" style="left:1151.2px;top:589px;letter-spacing:.7px">mm</div>
</body></html>
